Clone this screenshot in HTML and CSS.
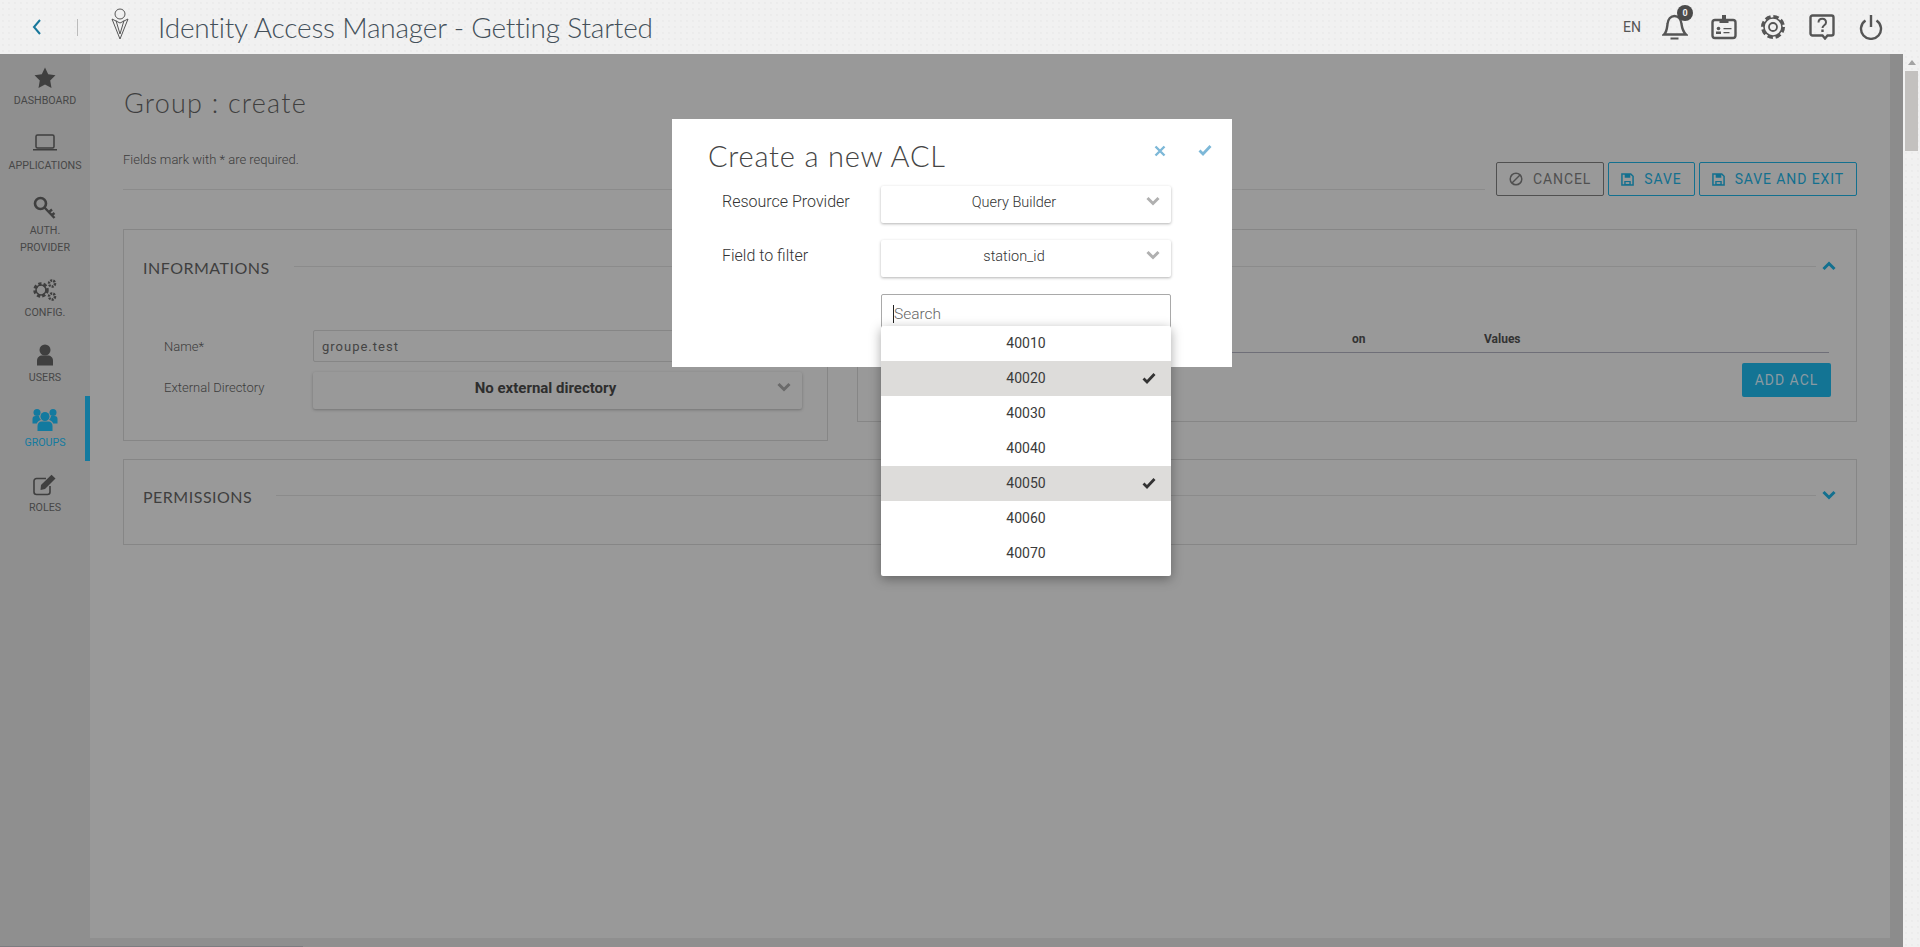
FILE: index.html
```html
<!DOCTYPE html>
<html lang="en">
<head>
  <meta charset="UTF-8" />
  <title>Identity Access Manager</title>
  <link rel="stylesheet" href="styles.css">
</head>
<body>
  <svg class="defs" width="0" height="0">
    <symbol id="chev-down" viewBox="0 0 14 10"><path d="M1.5 2 7 7.5 12.5 2" fill="none" stroke="currentColor" stroke-width="3"/></symbol>
    <symbol id="chev-up" viewBox="0 0 14 10"><path d="M1.5 8 7 2.5 12.5 8" fill="none" stroke="currentColor" stroke-width="3"/></symbol>
    <symbol id="floppy" viewBox="0 0 14 14"><path d="M1 1h9.5L13 3.5V13H1z" fill="none" stroke="currentColor" stroke-width="1.6"/><path d="M4 1h6v4H4zM3.5 8.5h7V13h-7z" fill="currentColor"/><path d="M5 9.8h4v2H5z" fill="#999"/></symbol>
    <symbol id="check" viewBox="0 0 14 12"><path d="M1.5 6.5 5 10l7.5-8" fill="none" stroke="currentColor" stroke-width="2.8"/></symbol>
  </svg>

  <header class="topbar">
    <svg class="back" width="12" height="18" viewBox="0 0 12 18"><path d="M9 2 3 9l6 7" fill="none" stroke="#17779b" stroke-width="2"/></svg>
    <span class="sep"></span>
    <svg class="logo" width="22" height="32" viewBox="0 0 22 32"><circle cx="11" cy="6" r="5" fill="none" stroke="#555"/><path d="M3 11 11 31 19 11 11 15zM7 12.500 11 26 15 12.500" fill="none" stroke="#555"/></svg>
    <div class="app-title">Identity Access Manager - Getting Started</div>
    <div class="top-actions">
      <span class="lang">EN</span>
      <span class="top-icon bell">
        <svg width="26" height="28" viewBox="0 0 26 28"><path d="M2 21.500c3-3 3-6.500 3.500-10.500C6 6 9 3 12.500 3S19 6 19.500 11c.5 4 1.500 7.500 4.500 10.500z" fill="none" stroke="#555" stroke-width="2.400"/><path d="M8.500 24.500h8v2h-8z" fill="#555"/></svg>
        <span class="badge">0</span>
      </span>
      <span class="top-icon">
        <svg width="26" height="26" viewBox="0 0 26 26"><rect x="1.500" y="6" width="23" height="18" rx="2.500" fill="none" stroke="#555" stroke-width="2.400"/><path d="M11 1h4v5h2.500v3h-9V6H11z" fill="#555"/><circle cx="7.500" cy="14.500" r="1.800" fill="#555"/><path d="M5 20v-2.500h5V20zM12.500 14h8v1.300h-8zM12.500 18h6v1.300h-6z" fill="#555"/></svg>
      </span>
      <span class="top-icon">
        <svg width="26" height="26" viewBox="0 0 26 26"><circle cx="13" cy="13" r="10.500" fill="none" stroke="#555" stroke-width="3" stroke-dasharray="5.500 2.750"/><circle cx="13" cy="13" r="9" fill="none" stroke="#555" stroke-width="1.600"/><circle cx="13" cy="13" r="4" fill="none" stroke="#555" stroke-width="1.800"/></svg>
      </span>
      <span class="top-icon">
        <svg width="26" height="26" viewBox="0 0 26 26"><path d="M3.500 1.500h19a2 2 0 0 1 2 2v16a2 2 0 0 1-2 2h-4l-2.500 3-2.500-3h-10a2 2 0 0 1-2-2v-16a2 2 0 0 1 2-2z" fill="none" stroke="#555" stroke-width="2.400"/><path d="M9.500 8.500c0-5 7.500-5 7.500 0 0 3-3.500 2.500-3.500 5.500" fill="none" stroke="#555" stroke-width="2"/><path d="M12.300 15.500h2.400v2.500h-2.400z" fill="#555"/></svg>
      </span>
      <span class="top-icon">
        <svg width="26" height="26" viewBox="0 0 26 26"><path d="M7.500 6.500a10 10 0 1 0 11 0" fill="none" stroke="#555" stroke-width="2.400"/><path d="M13 1v12" fill="none" stroke="#555" stroke-width="2.400"/></svg>
      </span>
    </div>
  </header>

  <div class="layout">
    <nav class="sidebar">
      <a class="nav-item">
        <svg width="22" height="22" viewBox="0 0 22 22"><path d="M11 .5l3.200 6.800 7.300 1-5.300 5.200 1.300 7.500-6.500-3.600-6.500 3.600 1.300-7.500L.5 8.300l7.300-1z" fill="#3f3f3f"/></svg>
        <span>Dashboard</span>
      </a>
      <a class="nav-item">
        <svg width="26" height="22" viewBox="0 0 26 22"><rect x="4" y="3" width="18" height="13" rx="1.500" fill="none" stroke="#3f3f3f" stroke-width="1.500"/><path d="M1 17h24v1.500H1z" fill="#3f3f3f"/></svg>
        <span>Applications</span>
      </a>
      <a class="nav-item">
        <svg width="24" height="24" viewBox="0 0 24 24"><circle cx="7.500" cy="7.500" r="5.500" fill="none" stroke="#3f3f3f" stroke-width="2.600"/><path d="M11.500 11.500 21.500 22M16 16l3-2.500M19 19l2.500-2" fill="none" stroke="#3f3f3f" stroke-width="2.400"/></svg>
        <span>Auth.<br>Provider</span>
      </a>
      <a class="nav-item">
        <svg width="26" height="24" viewBox="0 0 26 24"><circle cx="9" cy="12" r="6" fill="none" stroke="#3f3f3f" stroke-width="3.500" stroke-dasharray="3 2"/><circle cx="9" cy="12" r="5" fill="none" stroke="#3f3f3f" stroke-width="1.500"/><circle cx="20" cy="5.500" r="3" fill="none" stroke="#3f3f3f" stroke-width="2.500" stroke-dasharray="2 1"/><circle cx="20" cy="18.500" r="3" fill="none" stroke="#3f3f3f" stroke-width="2.500" stroke-dasharray="2 1"/></svg>
        <span>Config.</span>
      </a>
      <a class="nav-item">
        <svg width="20" height="22" viewBox="0 0 20 22"><circle cx="10" cy="6" r="5.500" fill="#3f3f3f"/><path d="M2 21.500v-5c0-3 2.500-5 5-5h6c2.500 0 5 2 5 5v5z" fill="#3f3f3f"/></svg>
        <span>Users</span>
      </a>
      <a class="nav-item active">
        <svg width="26" height="24" viewBox="0 0 26 24"><circle cx="13" cy="8.500" r="4.500" fill="currentColor"/><circle cx="5" cy="4.500" r="3.500" fill="currentColor"/><circle cx="21" cy="4.500" r="3.500" fill="currentColor"/><path d="M5.500 23v-5c0-3 2-4.500 4-4.500h7c2 0 4 1.500 4 4.500v5z" fill="currentColor"/><path d="M.5 14v-3c0-2 1-3 3-3H7c.2 1.500 .8 2.800 2 3.800-2 .8-3.500 2-4.200 3.700H.5zM25.500 14v-3c0-2-1-3-3-3H19c-.2 1.500-.8 2.800-2 3.800 2 .8 3.500 2 4.200 3.700h4.300z" fill="currentColor"/></svg>
        <span>Groups</span>
      </a>
      <a class="nav-item">
        <svg width="24" height="22" viewBox="0 0 24 22"><path d="M17 12v6a2.500 2.500 0 0 1-2.500 2.500h-11A2.500 2.500 0 0 1 1 18V7a2.500 2.500 0 0 1 2.500-2.500H13" fill="none" stroke="#3f3f3f" stroke-width="1.600"/><path d="M8 11 18.500 .8l4 3.700L12 15l-4.500 1z" fill="#3f3f3f"/></svg>
        <span>Roles</span>
      </a>
    </nav>

    <main class="main">
      <div class="page-head">
        <div class="page-intro">
          <h1>Group : create</h1>
          <p>Fields mark with * are required.</p>
        </div>
        <div class="page-actions">
          <button class="btn btn-grey">
            <svg width="14" height="14" viewBox="0 0 14 14"><circle cx="7" cy="7" r="5.800" fill="none" stroke="currentColor" stroke-width="1.500"/><path d="M3 11 11 3" stroke="currentColor" stroke-width="1.500"/></svg>
            Cancel
          </button>
          <button class="btn"><svg width="13" height="13"><use href="#floppy"/></svg>Save</button>
          <button class="btn"><svg width="13" height="13"><use href="#floppy"/></svg>Save and exit</button>
        </div>
      </div>

      <div class="panels">
        <section class="panel panel-info">
          <div class="panel-head"><h2>Informations</h2><span class="panel-line"></span></div>
          <div class="form-row">
            <label>Name*</label>
            <input class="text-input" value="groupe.test">
          </div>
          <div class="form-row">
            <label class="label-up">External Directory</label>
            <div class="select bold">No external directory<svg class="chev" width="14" height="10"><use href="#chev-down"/></svg></div>
          </div>
        </section>

        <section class="panel panel-acl">
          <div class="panel-head"><span class="panel-line"></span><svg class="panel-chev" width="14" height="10"><use href="#chev-up"/></svg></div>
          <div class="acl-cols"><span class="col-on">on</span><span>Values</span></div>
          <div class="acl-foot"><button class="btn-add">Add ACL</button></div>
        </section>
      </div>

      <section class="panel panel-perm">
        <div class="panel-head"><h2>Permissions</h2><span class="panel-line"></span><svg class="panel-chev" width="14" height="10"><use href="#chev-down"/></svg></div>
      </section>
    </main>

    <div class="strip"></div>
    <div class="scrollbar">
      <span class="scroll-arrow"></span>
      <span class="scroll-thumb"></span>
    </div>
  </div>

  <span class="hscroll"></span>

  <div class="modal">
    <div class="modal-head">
      <h3>Create a new ACL</h3>
      <svg class="modal-x" width="12" height="12" viewBox="0 0 12 12"><path d="M1.500 1.500l9 9M10.500 1.500l-9 9" stroke="#7db8d8" stroke-width="2.400"/></svg>
      <svg class="modal-ok" width="14" height="12"><use href="#check"/></svg>
    </div>
    <div class="modal-row">
      <label>Resource Provider</label>
      <div class="select">Query Builder<svg class="chev" width="14" height="10"><use href="#chev-down"/></svg></div>
    </div>
    <div class="modal-row">
      <label>Field to filter</label>
      <div class="select">station_id<svg class="chev" width="14" height="10"><use href="#chev-down"/></svg></div>
    </div>
    <div class="modal-row search-row">
      <label></label>
      <div class="search-wrap">
        <div class="search-box"><span class="caret"></span>Search</div>
        <ul class="dropdown">
          <li>40010</li>
          <li class="picked">40020<svg width="14" height="12"><use href="#check"/></svg></li>
          <li>40030</li>
          <li>40040</li>
          <li class="picked">40050<svg width="14" height="12"><use href="#check"/></svg></li>
          <li>40060</li>
          <li>40070</li>
        </ul>
      </div>
    </div>
  </div>
</body>
</html>
```

FILE: styles.css
```css
* {
  box-sizing: border-box;
}
html, body {
  height: 100%;
}
body {
  margin: 0;
  font-family: Roboto, "Liberation Sans", sans-serif;
  color: #3c3c3c;
  overflow: hidden;
  display: flex;
  flex-direction: column;
  position: relative;
}
.defs {
  position: absolute;
}

/* top bar */
.topbar {
  height: 54px;
  flex: none;
  display: flex;
  align-items: center;
  background-color: #f1f1f1;
  background-image: radial-gradient(#e6e6e6 0.6px, transparent 0.8px);
  background-size: 6px 6px;
}
.back {
  margin-left: 31px;
}
.sep {
  width: 1px;
  height: 17px;
  background: #bbb;
  margin-left: 34px;
}
.logo {
  margin-left: 31px;
  margin-top: -7px;
}
.app-title {
  margin-left: 27px;
  font-family: Lato, sans-serif;
  font-weight: 300;
  font-size: 28px;
  letter-spacing: -0.2px;
  color: #44505a;
}
.top-actions {
  margin-left: auto;
  margin-right: 36px;
  display: flex;
  align-items: center;
  gap: 23px;
}
.lang {
  font-size: 14px;
  color: #555;
  margin-right: -2px;
}
.top-icon {
  display: flex;
  position: relative;
}
.badge {
  position: absolute;
  top: -8px;
  left: 15px;
  width: 16px;
  height: 16px;
  border-radius: 50%;
  background: #4a4a4a;
  color: #eee;
  font-size: 9px;
  font-weight: 700;
  text-align: center;
  line-height: 16px;
}

/* page layout */
.layout {
  flex: 1;
  display: flex;
  min-height: 0;
  background: #8f8f8f;
}
.sidebar {
  width: 90px;
  flex: none;
  background: #8f8f8f;
}
.nav-item {
  display: flex;
  flex-direction: column;
  align-items: center;
  padding: 12px 0 10px;
  font-size: 10.700px;
  line-height: 17px;
  text-transform: uppercase;
  text-align: center;
  color: #474747;
}
.nav-item svg {
  height: 24px;
  margin-bottom: 2px;
}
.nav-item.active {
  color: #137a9f;
  box-shadow: inset -5px 0 0 #137a9f;
}
.main {
  flex: 1;
  height: 884px;
  padding: 0 33px;
  background: #999;
}
.strip {
  width: 13px;
  flex: none;
  background: #8c8c8c;
}
.scrollbar {
  width: 17px;
  flex: none;
  background-color: #f1f1f1;
  background-image: radial-gradient(#e6e6e6 0.6px, transparent 0.8px);
  background-size: 6px 6px;
  display: flex;
  flex-direction: column;
  align-items: center;
  padding-top: 6px;
}
.scroll-arrow {
  width: 0;
  height: 0;
  border-left: 4px solid transparent;
  border-right: 4px solid transparent;
  border-bottom: 5px solid #a3a3a3;
}
.scroll-thumb {
  width: 13px;
  height: 80px;
  margin-top: 6px;
  background: #c3c1bf;
}
.hscroll {
  position: absolute;
  left: 0;
  bottom: 0;
  width: 303px;
  height: 1px;
  background: #7c7c80;
}

/* page header */
.page-head {
  display: flex;
  align-items: flex-end;
  gap: 11px;
  height: 142px;
}
.page-intro {
  flex: 1;
  height: 136px;
  margin-bottom: 6px;
  border-bottom: 1px solid #8b8b8b;
}
h1 {
  margin: 31px 0 0 1px;
  font-family: Lato, sans-serif;
  font-weight: 300;
  font-size: 27px;
  line-height: 36px;
  letter-spacing: 1.2px;
  color: #3f3f3f;
}
.page-intro p {
  margin: 32px 0 0;
  font-size: 13px;
  font-weight: 300;
  line-height: 14px;
  color: #3c3c3c;
}
.page-actions {
  display: flex;
  gap: 4px;
}
.btn {
  height: 34px;
  padding: 0 12px;
  display: flex;
  align-items: center;
  gap: 10px;
  font-family: Roboto, sans-serif;
  font-size: 14px;
  letter-spacing: 0.9px;
  text-transform: uppercase;
  color: #13708f;
  background: transparent;
  border: 1px solid #13708f;
  border-radius: 2px;
}
.btn-grey {
  color: #505050;
  border-color: #505050;
}

/* panels */
.panels {
  display: grid;
  grid-template-columns: 705px 1000px;
  gap: 29px;
  align-items: start;
  margin-top: 33px;
}
.panel {
  border: 1px solid #868686;
}
.panel-head {
  display: flex;
  align-items: center;
  gap: 24px;
  height: 72px;
  padding-left: 19px;
}
h2 {
  margin: 2px 0 0;
  font-family: Lato, sans-serif;
  font-weight: 400;
  font-size: 16px;
  letter-spacing: 0.5px;
  text-transform: uppercase;
  color: #3f3f3f;
}
.panel-line {
  flex: 1;
  height: 1px;
  background: #8b8b8b;
}
.panel-chev {
  color: #13708f;
  margin: 0 20px 0 -18px;
}
.panel-info {
  height: 212px;
}
.form-row {
  display: flex;
  align-items: center;
  padding-left: 40px;
  margin-bottom: 10px;
}
.panel-info .form-row:nth-child(2) {
  margin-top: 28px;
}
.form-row label {
  width: 149px;
  flex: none;
  font-size: 13px;
  font-weight: 300;
  color: #3c3c3c;
}
.label-up {
  margin-bottom: 6px;
}
.text-input {
  width: 489px;
  height: 32px;
  padding: 0 8px;
  font-family: Roboto, sans-serif;
  font-size: 13px;
  letter-spacing: 1px;
  color: #444;
  background: transparent;
  border: 1px solid #868686;
  border-radius: 2px;
}
.select {
  position: relative;
  display: flex;
  align-items: center;
  justify-content: center;
  width: 290px;
  height: 37px;
  padding: 0 24px 5px 0;
  font-size: 14.500px;
  font-weight: 300;
  color: #333;
  border-radius: 2px;
  box-shadow: 0 1px 3px rgba(0, 0, 0, 0.25);
}
.select.bold {
  width: 489px;
  font-size: 15px;
  font-weight: 700;
  color: #2e2e2e;
}
.chev {
  position: absolute;
  right: 11px;
  top: 10px;
  color: #6a6a6a;
}
.panel-acl {
  height: 193px;
}
.acl-cols {
  display: flex;
  gap: 119px;
  margin: 29px 27px 0 0;
  padding: 0 0 5px 494px;
  font-size: 12px;
  line-height: 16px;
  font-weight: 700;
  color: #333;
  border-bottom: 1px solid #6f6f78;
}
.col-on {
  width: 13px;
}
.acl-foot {
  display: flex;
  justify-content: flex-end;
  margin: 10px 25px 0 0;
}
.btn-add {
  width: 89px;
  height: 34px;
  font-family: Roboto, sans-serif;
  font-size: 14px;
  letter-spacing: 1px;
  text-transform: uppercase;
  color: #8a9aa2;
  background: #137494;
  border: none;
  border-radius: 2px;
}
.panel-perm {
  height: 86px;
  margin-top: 18px;
}
.panel-perm .panel-head {
  height: 70px;
}

/* modal */
.modal {
  position: absolute;
  left: 672px;
  top: 119px;
  width: 560px;
  height: 248px;
  padding: 0 0 0 50px;
  background: #fff;
}
.modal-head {
  position: relative;
  height: 67px;
  margin-left: -14px;
  padding-top: 17px;
}
h3 {
  margin: 0;
  font-family: Lato, sans-serif;
  font-weight: 300;
  font-size: 29px;
  line-height: 40px;
  letter-spacing: 0.8px;
  color: #444;
}
.modal-x {
  position: absolute;
  left: 446px;
  top: 26px;
}
.modal-ok {
  position: absolute;
  left: 490px;
  top: 25px;
  color: #7db8d8;
}
.modal-row {
  display: flex;
  align-items: center;
  margin-bottom: 17px;
}
.modal-row label {
  width: 159px;
  flex: none;
  margin-bottom: 6px;
  font-size: 16px;
  font-weight: 300;
  color: #333;
}
.modal-row .chev {
  color: #b0b0b0;
}
.modal-row .select {
  box-shadow: 0 1px 3px rgba(0, 0, 0, 0.3);
}
.search-wrap {
  position: relative;
  width: 290px;
}
.search-box {
  height: 36px;
  padding: 4px 0 0 12px;
  display: flex;
  align-items: center;
  font-size: 15.500px;
  font-weight: 300;
  color: #666;
  border: 1px solid #a9a9a9;
  border-radius: 2px;
  position: relative;
}
.caret {
  position: absolute;
  left: 11px;
  top: 10px;
  width: 1px;
  height: 18px;
  background: #222;
}
.dropdown {
  position: absolute;
  left: 0;
  top: 32px;
  width: 290px;
  margin: 0;
  padding: 0 0 5px;
  list-style: none;
  background: #fff;
  border-radius: 2px;
  box-shadow: 0 3px 12px rgba(0, 0, 0, 0.35);
}
.dropdown li {
  position: relative;
  height: 35px;
  line-height: 35px;
  text-align: center;
  font-size: 14px;
  color: #3a3a3a;
}
.dropdown li.picked {
  background: #dddcda;
}
.dropdown li svg {
  position: absolute;
  right: 15px;
  top: 11px;
  color: #333;
}
```
